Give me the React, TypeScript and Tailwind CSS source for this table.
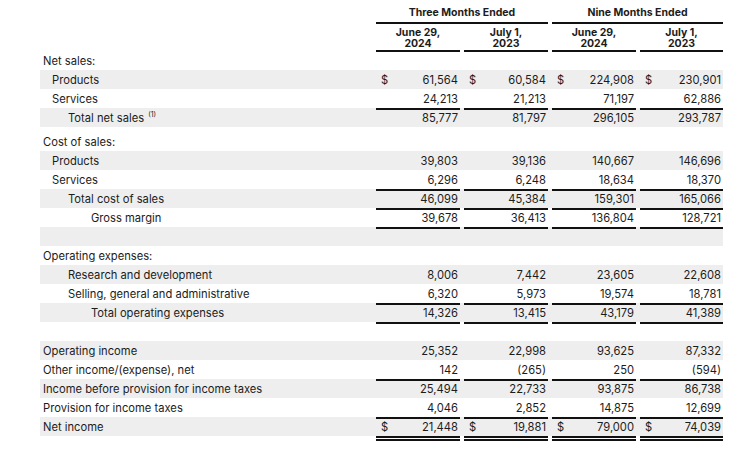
import React from "react";

type Row =
  | { kind: "spacer"; h: number }
  | {
      kind: "row";
      label?: string;
      sup?: string;
      indent: number;
      gray: boolean;
      vals?: string[];
      dollar?: boolean;
      line?: boolean;
      short?: boolean;
    };

const rows: Row[] = [
  { kind: "row", label: "Net sales:", indent: 3, gray: false, short: true },
  { kind: "row", label: "Products", indent: 12, gray: true, vals: ["61,564", "60,584", "224,908", "230,901"], dollar: true },
  { kind: "row", label: "Services", indent: 12, gray: false, vals: ["24,213", "21,213", "71,197", "62,886"] },
  { kind: "row", label: "Total net sales", sup: "(1)", indent: 28, gray: true, vals: ["85,777", "81,797", "296,105", "293,787"], line: true },
  { kind: "spacer", h: 5 },
  { kind: "row", label: "Cost of sales:", indent: 3, gray: false },
  { kind: "row", label: "Products", indent: 12, gray: true, vals: ["39,803", "39,136", "140,667", "146,696"] },
  { kind: "row", label: "Services", indent: 12, gray: false, vals: ["6,296", "6,248", "18,634", "18,370"] },
  { kind: "row", label: "Total cost of sales", indent: 28, gray: true, vals: ["46,099", "45,384", "159,301", "165,066"], line: true },
  { kind: "row", label: "Gross margin", indent: 51, gray: false, vals: ["39,678", "36,413", "136,804", "128,721"], line: true },
  { kind: "row", indent: 3, gray: true, vals: ["", "", "", ""], line: true },
  { kind: "row", label: "Operating expenses:", indent: 3, gray: false },
  { kind: "row", label: "Research and development", indent: 28, gray: true, vals: ["8,006", "7,442", "23,605", "22,608"] },
  { kind: "row", label: "Selling, general and administrative", indent: 28, gray: false, vals: ["6,320", "5,973", "19,574", "18,781"] },
  { kind: "row", label: "Total operating expenses", indent: 51, gray: true, vals: ["14,326", "13,415", "43,179", "41,389"], line: true },
  { kind: "row", indent: 3, gray: false, vals: ["", "", "", ""], line: true },
  { kind: "row", label: "Operating income", indent: 3, gray: true, vals: ["25,352", "22,998", "93,625", "87,332"] },
  { kind: "row", label: "Other income/(expense), net", indent: 3, gray: false, vals: ["142", "(265)", "250", "(594)"] },
  { kind: "row", label: "Income before provision for income taxes", indent: 3, gray: true, vals: ["25,494", "22,733", "93,875", "86,738"], line: true },
  { kind: "row", label: "Provision for income taxes", indent: 3, gray: false, vals: ["4,046", "2,852", "14,875", "12,699"] },
  { kind: "row", label: "Net income", indent: 3, gray: true, vals: ["21,448", "19,881", "79,000", "74,039"], dollar: true, line: true },
];

const colW = ["w-[84px]", "w-[84px]", "w-[84px]", "w-[83px]"];
const colMl = ["ml-0", "ml-[4px]", "ml-[4px]", "ml-[4px]"];

export default function App() {
  return (
    <div
      className="w-[746px] h-[449px] bg-white text-[#1c1c1c] overflow-hidden"
      style={{ fontFamily: "Inter, 'Liberation Sans', sans-serif" }}
    >
      {/* Header */}
      <div className="flex ml-[376px] h-[24px] text-[10.5px] font-bold">
        <div className="w-[172px] h-[24px] border-b-2 border-[#111] flex items-center justify-center pt-[3px]">
          Three Months Ended
        </div>
        <div className="w-[171px] ml-[4px] h-[24px] border-b-2 border-[#111] flex items-center justify-center pt-[3px]">
          Nine Months Ended
        </div>
      </div>
      <div className="flex ml-[376px] h-[28px] text-[10.5px] font-bold">
        {[
          ["June 29,", "2024"],
          ["July 1,", "2023"],
          ["June 29,", "2024"],
          ["July 1,", "2023"],
        ].map((t, i) => (
          <div
            key={i}
            className={`${colW[i]} ${colMl[i]} h-[28px] border-b-2 border-[#111] flex flex-col items-center justify-end text-center pb-[1px]`}
          >
            <span className="block leading-[11px]">{t[0]}</span>
            <span className="block leading-[11px]">{t[1]}</span>
          </div>
        ))}
      </div>
      {/* Body */}
      <div className="ml-[40px] w-[683px] text-[11.2px]">
        {rows.map((r, idx) =>
          r.kind === "spacer" ? (
            <div key={idx} className="h-[5px]" />
          ) : (
            <div key={idx} className={`flex ${r.short ? "h-[18px]" : "h-[19px]"} ${r.gray ? "bg-[#eeeeee]" : "bg-white"}`}>
              <div
                className={`w-[336px] h-full flex items-center whitespace-nowrap ${r.short ? "" : "pt-[1px]"}`}
                style={{ paddingLeft: r.indent }}
              >
                {r.label}
                {r.sup && <sup className="text-[7px] ml-[4px] top-[-0.4em]">{r.sup}</sup>}
              </div>
              {r.vals &&
                r.vals.map((v, i) => (
                  <div
                    key={i}
                    className={`${colW[i]} ${colMl[i]} h-[19px] flex items-center justify-between pl-[5px] pr-[2px] ${
                      r.line ? "border-t-2 border-[#111]" : "pt-[1px]"
                    }`}
                  >
                    <span>{r.dollar ? "$" : ""}</span>
                    <span>{v}</span>
                  </div>
                ))}
            </div>
          )
        )}
        <div className="flex">
          <div className="w-[336px]" />
          {[0, 1, 2, 3].map((i) => (
            <div key={i} className={`${colW[i]} ${colMl[i]} h-[5px] border-t-2 border-b-2 border-[#111]`} />
          ))}
        </div>
      </div>
    </div>
  );
}
